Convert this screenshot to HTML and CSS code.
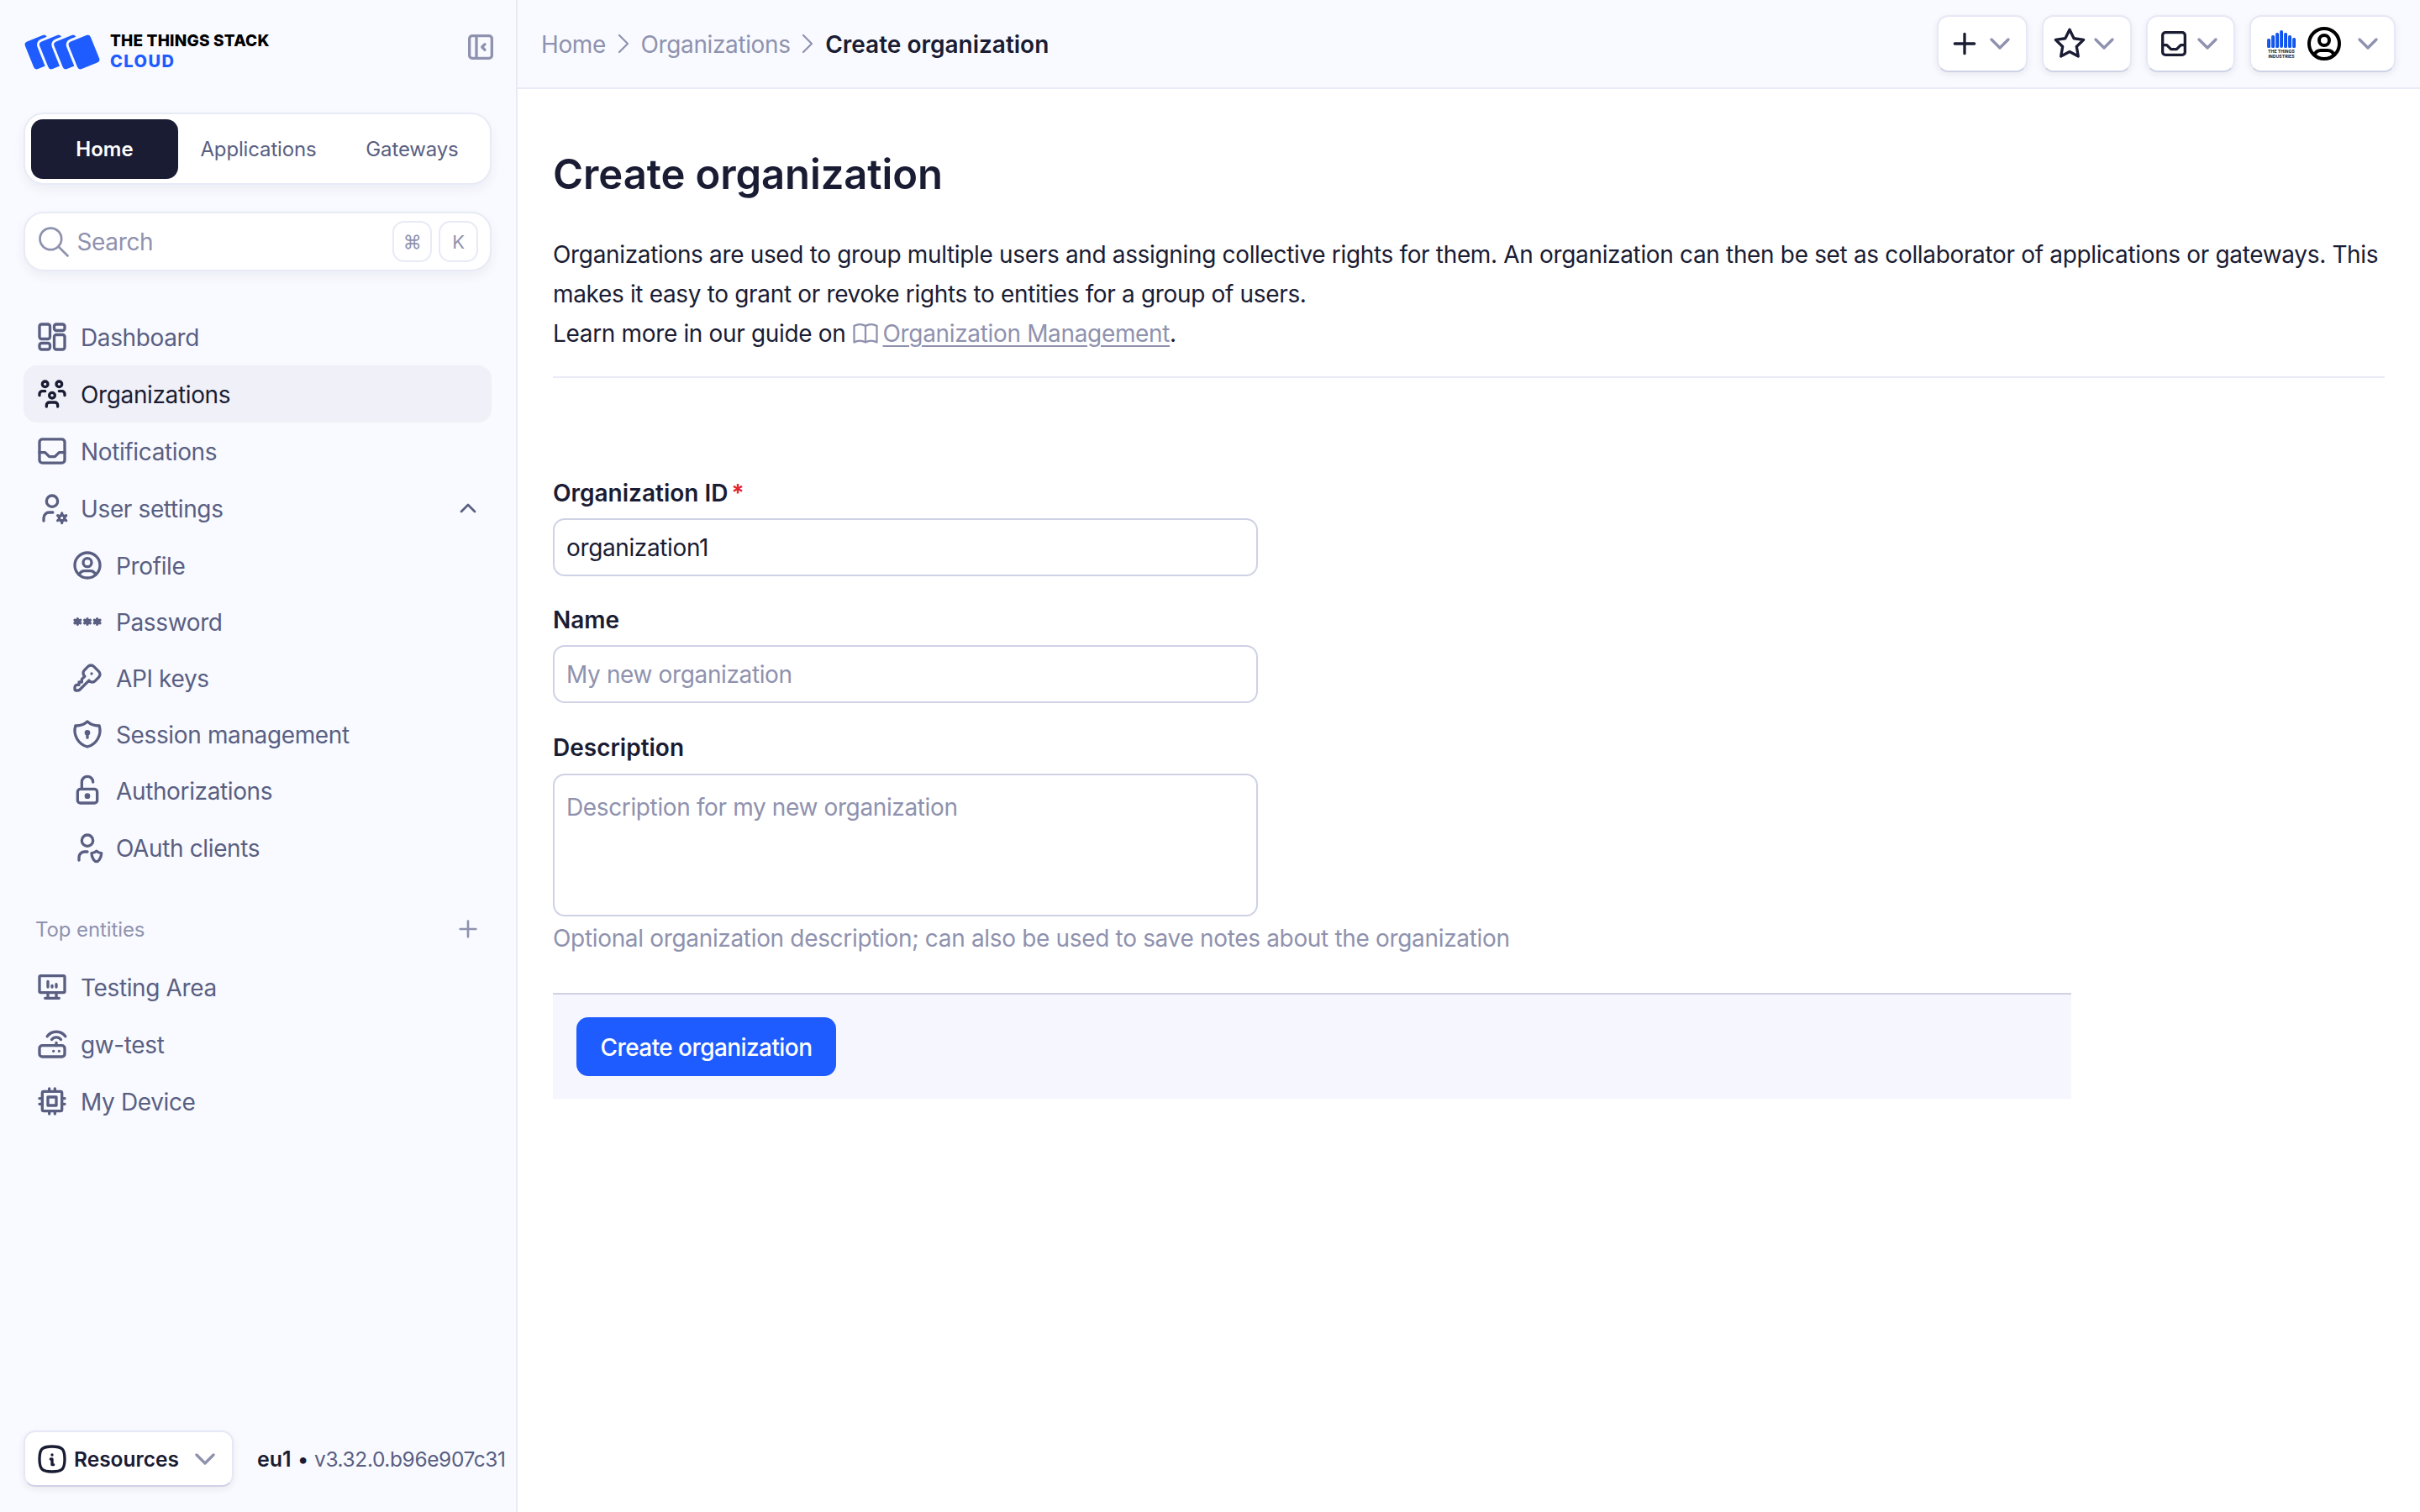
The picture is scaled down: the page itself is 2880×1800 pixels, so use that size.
FILE: index.html
```html
<!DOCTYPE html>
<html lang="en">
<head>
<meta charset="utf-8">
<title>Create organization</title>
<link rel="stylesheet" href="styles.css">
</head>
<body>
<div class="app">
  <aside class="sidebar">
    <div class="brand">
      <div class="logo">
        <svg class="logo-mark" viewBox="0 0 90 44">
          <g fill="#1f5cff" stroke="#f8faff" stroke-width="3">
            <rect x="4.500" y="3" width="31" height="38" rx="5.500" transform="rotate(-22 20 22)"/>
            <rect x="21.800" y="3" width="31" height="38" rx="5.500" transform="rotate(-22 37.300 22)"/>
            <rect x="39.100" y="3" width="31" height="38" rx="5.500" transform="rotate(-22 54.600 22)"/>
            <rect x="56.500" y="3" width="31" height="38" rx="5.500" transform="rotate(-22 72 22)"/>
          </g>
        </svg>
        <div class="logo-text">
          <span class="logo-top">THE THINGS STACK</span>
          <span class="logo-bottom">CLOUD</span>
        </div>
      </div>
      <svg class="ic ic-muted" viewBox="0 0 24 24"><path d="M4 6a2 2 0 0 1 2-2h12a2 2 0 0 1 2 2v12a2 2 0 0 1-2 2H6a2 2 0 0 1-2-2z"/><path d="M9 4v16"/><path d="M15 10l-2 2 2 2"/></svg>
    </div>

    <div class="switcher">
      <a class="switch-item is-active">Home</a>
      <a class="switch-item">Applications</a>
      <a class="switch-item">Gateways</a>
    </div>

    <div class="search">
      <svg class="ic ic-search" viewBox="0 0 24 24"><circle cx="10" cy="10" r="7"/><path d="M21 21l-6-6"/></svg>
      <span class="search-label">Search</span>
      <span class="kbd">⌘</span>
      <span class="kbd">K</span>
    </div>

    <nav class="nav">
      <a class="nav-row"><svg class="ic" viewBox="0 0 24 24"><rect x="3" y="3" width="7.500" height="10.500" rx="1.500"/><rect x="13.500" y="3" width="7.500" height="4.500" rx="1.500"/><rect x="3" y="16.500" width="7.500" height="4.500" rx="1.500"/><rect x="13.500" y="10.500" width="7.500" height="10.500" rx="1.500"/></svg>Dashboard</a>
      <a class="nav-row is-current"><svg class="ic" viewBox="0 0 24 24"><path d="M10 13a2 2 0 1 0 4 0 2 2 0 0 0-4 0"/><path d="M8 21v-1a2 2 0 0 1 2-2h4a2 2 0 0 1 2 2v1"/><path d="M15 5a2 2 0 1 0 4 0 2 2 0 0 0-4 0"/><path d="M17 10h2a2 2 0 0 1 2 2v1"/><path d="M5 5a2 2 0 1 0 4 0 2 2 0 0 0-4 0"/><path d="M3 13v-1a2 2 0 0 1 2-2h2"/></svg>Organizations</a>
      <a class="nav-row"><svg class="ic" viewBox="0 0 24 24"><path d="M3 5.500a2 2 0 0 1 2-2h14a2 2 0 0 1 2 2v13a2 2 0 0 1-2 2H5a2 2 0 0 1-2-2z"/><path d="M3 13h4l3 3h4l3-3h4"/></svg>Notifications</a>
      <a class="nav-row"><svg class="ic" viewBox="0 0 24 24"><path d="M8 7a4 4 0 1 0 8 0 4 4 0 0 0-8 0"/><path d="M6 21v-2a4 4 0 0 1 4-4h2.500"/><circle cx="19" cy="19" r="2"/><path d="M19 15.500V17M19 21v1.500M22 17.250l-1.300.75M17.300 20l-1.300.75M16 17.250l1.300.75M20.700 20l1.300.75"/></svg>User settings<svg class="ic-small ic-end" viewBox="0 0 24 24"><path d="M6 15l6-6 6 6"/></svg></a>
      <a class="nav-row nav-sub"><svg class="ic" viewBox="0 0 24 24"><circle cx="12" cy="12" r="9"/><circle cx="12" cy="10" r="3"/><path d="M6.170 18.850A4 4 0 0 1 10 16h4a4 4 0 0 1 3.830 2.850"/></svg>Profile</a>
      <a class="nav-row nav-sub"><svg class="ic" viewBox="0 0 24 24"><path d="M12 10v4M10 13l4-2M10 11l4 2M5 10v4M3 13l4-2M3 11l4 2M19 10v4M17 13l4-2M17 11l4 2"/></svg>Password</a>
      <a class="nav-row nav-sub"><svg class="ic" viewBox="0 0 24 24"><path d="M16.555 3.843l3.602 3.602a2.877 2.877 0 0 1 0 4.069l-2.643 2.643a2.877 2.877 0 0 1-4.069 0l-.301-.301-6.558 6.558a2 2 0 0 1-1.239.578l-.175.008h-1.172a1 1 0 0 1-.993-.883l-.007-.117v-1.172a2 2 0 0 1 .467-1.284l.119-.13.414-.414h2v-2h2v-2l2.144-2.144-.301-.301a2.877 2.877 0 0 1 0-4.069l2.643-2.643a2.877 2.877 0 0 1 4.069 0z"/><path d="M15 9h.01"/></svg>API keys</a>
      <a class="nav-row nav-sub"><svg class="ic" viewBox="0 0 24 24"><path d="M12 3a12 12 0 0 0 8.500 3A12 12 0 0 1 12 21 12 12 0 0 1 3.500 6 12 12 0 0 0 12 3"/><circle cx="12" cy="11" r="1"/><path d="M12 12v2.500"/></svg>Session management</a>
      <a class="nav-row nav-sub"><svg class="ic" viewBox="0 0 24 24"><rect x="5" y="11" width="14" height="10" rx="2"/><circle cx="12" cy="16" r="1"/><path d="M8 11V6a4 4 0 0 1 8 0"/></svg>Authorizations</a>
      <a class="nav-row nav-sub"><svg class="ic" viewBox="0 0 24 24"><path d="M6 21v-2a4 4 0 0 1 4-4h2"/><path d="M22 16c0 4-2.500 6-3.500 6s-3.500-2-3.500-6c1 0 2.500-.5 3.500-1.500 1 1 2.500 1.500 3.500 1.500z"/><path d="M8 7a4 4 0 1 0 8 0 4 4 0 0 0-8 0"/></svg>OAuth clients</a>
    </nav>

    <div class="section-head">
      <span>Top entities</span>
      <svg class="ic-small ic-muted" viewBox="0 0 24 24"><path d="M12 5v14M5 12h14"/></svg>
    </div>
    <nav class="nav">
      <a class="nav-row"><svg class="ic" viewBox="0 0 24 24"><rect x="3" y="4" width="18" height="12" rx="1"/><path d="M7 20h10M9 16v4M15 16v4M9 12V8M12 12v-1M15 12v-2"/></svg>Testing Area</a>
      <a class="nav-row"><svg class="ic" viewBox="0 0 24 24"><rect x="3" y="13" width="18" height="8" rx="2"/><path d="M17 17v.01M13 17v.01M15 13v-2M11.750 8.750a4 4 0 0 1 6.500 0M8.500 6.500a8 8 0 0 1 13 0"/></svg>gw-test</a>
      <a class="nav-row"><svg class="ic" viewBox="0 0 24 24"><rect x="5" y="5" width="14" height="14" rx="1"/><path d="M9 9h6v6H9zM3 10h2M3 14h2M10 3v2M14 3v2M21 10h-2M21 14h-2M14 21v-2M10 21v-2"/></svg>My Device</a>
    </nav>

    <div class="side-foot">
      <button class="resources">
        <svg class="ic ic-dark" viewBox="0 0 24 24"><path d="M12 9h.01M11 12h1v4h1"/><path d="M12 3c7.200 0 9 1.800 9 9s-1.800 9-9 9-9-1.800-9-9 1.800-9 9-9z"/></svg>
        <span>Resources</span>
        <svg class="ic ic-muted" viewBox="0 0 24 24"><path d="M6 9l6 6 6-6"/></svg>
      </button>
      <div class="version"><b>eu1</b><i>•</i><span>v3.32.0.b96e907c31</span></div>
    </div>
  </aside>

  <div class="main">
    <header class="topbar">
      <div class="crumbs">
        <a>Home</a>
        <svg class="crumb-sep" viewBox="0 0 24 24"><path d="M9 6l6 6-6 6"/></svg>
        <a>Organizations</a>
        <svg class="crumb-sep" viewBox="0 0 24 24"><path d="M9 6l6 6-6 6"/></svg>
        <strong>Create organization</strong>
      </div>
      <div class="actions">
        <button class="tool">
          <svg class="ic ic-dark" viewBox="0 0 24 24"><path d="M12 5v14M5 12h14"/></svg>
          <svg class="ic ic-muted" viewBox="0 0 24 24"><path d="M6 9l6 6 6-6"/></svg>
        </button>
        <button class="tool tool-star">
          <svg class="ic ic-dark" viewBox="0 0 24 24"><path d="M12 17.750l-6.172 3.245 1.179-6.873-5-4.867 6.900-1 3.086-6.253 3.086 6.253 6.900 1-5 4.867 1.179 6.873z"/></svg>
          <svg class="ic ic-muted" viewBox="0 0 24 24"><path d="M6 9l6 6 6-6"/></svg>
        </button>
        <button class="tool tool-inbox">
          <svg class="ic ic-dark" viewBox="0 0 24 24"><path d="M4 6a2 2 0 0 1 2-2h12a2 2 0 0 1 2 2v12a2 2 0 0 1-2 2H6a2 2 0 0 1-2-2z"/><path d="M4 13h3l3 3h4l3-3h3"/></svg>
          <svg class="ic ic-muted" viewBox="0 0 24 24"><path d="M6 9l6 6 6-6"/></svg>
        </button>
        <button class="tool tool-user">
          <svg class="tti" viewBox="0 0 34 34">
            <defs><linearGradient id="tti" x1="0" x2="1" y1="0" y2="0"><stop offset="0" stop-color="#1f6cff"/><stop offset="1" stop-color="#0b45d8"/></linearGradient></defs>
            <g fill="url(#tti)">
              <rect x="0" y="11" width="4" height="11" rx="1.500"/>
              <rect x="5" y="7" width="4" height="15" rx="1.500"/>
              <rect x="10" y="4" width="4" height="18" rx="1.500"/>
              <rect x="15" y="1" width="4" height="21" rx="2"/>
              <rect x="20" y="4" width="4" height="18" rx="1.500"/>
              <rect x="25" y="7" width="4" height="15" rx="1.500"/>
              <rect x="30" y="10" width="4" height="12" rx="1.500"/>
            </g>
            <text class="tti-text" x="17" y="27.500">THE THINGS</text>
            <text class="tti-text" x="17" y="33.500">INDUSTRIES</text>
          </svg>
          <svg class="ic-user" viewBox="0 0 24 24"><circle cx="12" cy="12" r="9"/><circle cx="12" cy="10" r="3"/><path d="M6.170 18.850A4 4 0 0 1 10 16h4a4 4 0 0 1 3.830 2.850"/></svg>
          <svg class="ic ic-muted" viewBox="0 0 24 24"><path d="M6 9l6 6 6-6"/></svg>
        </button>
      </div>
    </header>

    <main class="content">
      <h1 class="title">Create organization</h1>
      <p class="intro">Organizations are used to group multiple users and assigning collective rights for them. An organization can then be set as collaborator of applications or gateways. This makes it easy to grant or revoke rights to entities for a group of users.<br>Learn more in our guide on <svg class="ic-book" viewBox="0 0 24 24"><path d="M3 19a9 9 0 0 1 9 0 9 9 0 0 1 9 0M3 6a9 9 0 0 1 9 0 9 9 0 0 1 9 0M3 6v13M12 6v13M21 6v13"/></svg> <a class="doc-link">Organization Management</a>.</p>
      <form class="form">
        <label class="label" for="org-id">Organization ID<span class="req">*</span></label>
        <input class="field" id="org-id" type="text" value="organization1">
        <label class="label label-next" for="org-name">Name</label>
        <input class="field" id="org-name" type="text" placeholder="My new organization">
        <label class="label label-next label-desc" for="org-desc">Description</label>
        <textarea class="field field-area" id="org-desc" placeholder="Description for my new organization"></textarea>
        <p class="hint">Optional organization description; can also be used to save notes about the organization</p>
        <div class="submit-bar">
          <button class="primary" type="button">Create organization</button>
        </div>
      </form>
    </main>
  </div>
</div>
</body>
</html>
```
FILE: styles.css
```css
* { box-sizing: border-box; }
html, body { margin: 0; height: 100%; }
body {
  font-family: Inter, "Liberation Sans", sans-serif;
  font-size: 28px;
  letter-spacing: -.37px;
  color: #1a1c33;
  background: #fff;
}
.app { display: flex; height: 1800px; overflow: hidden; }

svg { flex: none; fill: none; stroke-linecap: round; stroke-linejoin: round; }
.ic { width: 40px; height: 40px; stroke: currentColor; stroke-width: 2; }
.ic-small { width: 32px; height: 32px; stroke: currentColor; stroke-width: 2; }
.ic-muted { color: #8f92ae; }
.ic-dark { color: #1a1c33; }

.sidebar {
  width: 616px;
  flex: none;
  display: flex;
  flex-direction: column;
  padding: 0 29px 30px 28px;
  background: #f8faff;
  border-right: 2px solid #e8eaf6;
}
.brand { height: 134px; padding-top: 38px; display: flex; justify-content: space-between; align-items: flex-start; }
.brand > .ic { margin: -2px -7px 0 0; }
.logo { display: flex; align-items: center; gap: 13px; }
.logo-mark { width: 90px; height: 44px; overflow: visible; }
.logo-text { display: flex; flex-direction: column; margin-top: -2px; font-weight: 800; font-size: 19px; line-height: 25px; letter-spacing: .2px; }
.logo-top { color: #000; }
.logo-bottom { color: #1f5cff; font-size: 20px; letter-spacing: 1.5px; }

.switcher {
  height: 86px;
  display: flex;
  align-items: center;
  padding: 0 1px 0 7px;
  background: #fff;
  border: 2px solid #e8eaf6;
  border-radius: 24px;
  box-shadow: 0 6px 14px rgba(26, 28, 51, .05);
}
.switch-item { flex: 1; font-size: 24px; letter-spacing: -.15px; color: #5a5f82; text-align: center; line-height: 71px; }
.switch-item.is-active {
  flex: none;
  width: 175px;
  margin-right: 4px;
  background: #1a1c33;
  color: #fff;
  font-weight: 600;
  letter-spacing: 0;
  border-radius: 14px;
}

.search {
  margin: 32px 0 44px;
  height: 71px;
  display: flex;
  align-items: center;
  gap: 8px;
  padding: 0 14px 0 11.500px;
  background: #fff;
  border: 2px solid #e8eaf6;
  border-radius: 24px;
  box-shadow: 0 6px 14px rgba(26, 28, 51, .05);
  color: #8f92ae;
}
.ic-search { width: 44px; height: 44px; stroke-width: 1.500; margin-right: -2px; }
.search-label { flex: 1; font-size: 28px; }
.kbd {
  width: 47px;
  height: 49px;
  display: flex;
  align-items: center;
  justify-content: center;
  font-size: 22px;
  border: 2px solid #e8eaf6;
  border-radius: 14px;
}

.nav { display: flex; flex-direction: column; }
.nav-row {
  height: 68px;
  display: flex;
  align-items: center;
  gap: 14px;
  padding: 2px 14px 0;
  color: #5a5f82;
  border-radius: 16px;
}
.nav-row > .ic { margin-top: -2px; }
.nav-row.is-current { background: #f0f0f8; color: #1a1c33; }
.nav-sub { height: 67.200px; padding-left: 56px; }
.ic-end { margin-left: auto; margin-right: -2px; margin-top: -2px; }

.section-head {
  height: 40px;
  margin: 44px 0 15px;
  padding: 0 12px 0 14px;
  display: flex;
  align-items: center;
  justify-content: space-between;
  color: #8f92ae;
  font-size: 24px;
  letter-spacing: -.1px;
}

.side-foot { margin-top: auto; display: flex; align-items: center; gap: 28px; white-space: nowrap; }
.resources {
  flex: none;
  width: 250px;
  height: 67px;
  display: flex;
  align-items: center;
  gap: 6px;
  padding: 0 12px;
  background: #fff;
  border: 2px solid #e6e8f5;
  border-bottom-color: #cfd2e5;
  border-radius: 14px;
  box-shadow: 0 3px 8px rgba(26, 28, 51, .07);
  font: 600 24.500px Inter, "Liberation Sans", sans-serif;
  color: #1a1c33;
}
.resources span { flex: 1; text-align: left; }
.version { display: flex; align-items: center; gap: 7px; font-size: 24.500px; letter-spacing: -.4px; color: #5a5f82; }
.version b { font-size: 25px; letter-spacing: 0; font-weight: 600; color: #1a1c33; }
.version i { font-style: normal; color: #1a1c33; }

.main { flex: 1; min-width: 0; display: flex; flex-direction: column; }
.topbar {
  height: 106px;
  flex: none;
  display: flex;
  align-items: center;
  justify-content: space-between;
  padding: 0 29px 0 28px;
  background: #f8faff;
  border-bottom: 2px solid #e8eaf6;
}
.crumbs { display: flex; align-items: center; gap: .75px; color: #8f92ae; padding-top: 2px; }
.crumbs strong { font-weight: 600; letter-spacing: 0; color: #1a1c33; }
.crumb-sep { width: 40px; height: 40px; stroke: #8f92ae; stroke-width: 1.300; margin-top: -2px; }
.actions { display: flex; gap: 17px; }
.tool {
  height: 68px;
  width: 108px;
  display: flex;
  align-items: center;
  gap: 2px;
  padding: 0 11px;
  background: #fff;
  border: 2px solid #e6e8f5;
  border-bottom-color: #cfd2e5;
  border-radius: 14px;
  box-shadow: 0 3px 8px rgba(26, 28, 51, .07);
}
.tool-star { width: 107px; gap: 1px; }
.tool-inbox { width: 106px; gap: 0; }
.tool-user { width: 174px; gap: 0; padding-left: 19px; }
.tti { width: 34px; height: 34px; margin-right: 10px; overflow: visible; }
.tti-text { font: 700 5.200px Inter, "Liberation Sans", sans-serif; letter-spacing: 0; fill: #1a1c33; text-anchor: middle; }
.ic-user { width: 48px; height: 48px; stroke: #000; stroke-width: 2; margin-right: 8px; }

.content { padding: 72px 42px 0; }
.title { margin: 0; font-size: 49px; line-height: 60px; font-weight: 600; letter-spacing: -.1px; }
.intro { margin: 42px 0 0; line-height: 47px; letter-spacing: -.34px; padding-bottom: 27px; border-bottom: 2px solid #e8eaf6; }
.ic-book { width: 36px; height: 36px; margin: 0 -5px 0 -2px; stroke: #8f92ae; stroke-width: 1.500; vertical-align: -8px; }
.doc-link { color: #8f92ae; text-decoration: underline; text-underline-offset: 4px; }

.form { width: 1807px; margin-top: 117px; display: flex; flex-direction: column; }
.label { display: block; line-height: 40px; font-weight: 600; letter-spacing: 0; margin-bottom: 10px; }
.label-next { margin-top: 32px; }
.label-desc { margin-top: 33px; margin-bottom: 11px; }
.req { color: #e5232b; margin-left: 4px; }
.field {
  display: block;
  width: 839px;
  height: 69px;
  padding: 0 14px;
  font: 400 28px Inter, "Liberation Sans", sans-serif;
  letter-spacing: -.37px;
  color: #1a1c33;
  background: #fff;
  border: 2px solid #cfd2e5;
  border-radius: 14px;
  outline: none;
}
.field::placeholder { color: #8f92ae; opacity: 1; }
.field-area { height: 170px; padding: 18px 14px; resize: none; line-height: 40px; }
.hint { margin: 6px 0 45px; line-height: 40px; letter-spacing: -.33px; color: #8f92ae; }
.submit-bar {
  height: 126px;
  padding: 27px 28px 0;
  background: #f5f6fe;
  border-top: 2px solid #cfd2e5;
}
.primary {
  width: 309px;
  height: 70px;
  padding: 2px 0 0;
  border: 0;
  border-radius: 14px;
  background: #1f5cff;
  color: #fff;
  font: 500 28px Inter, "Liberation Sans", sans-serif;
  letter-spacing: -.58px;
}
```
